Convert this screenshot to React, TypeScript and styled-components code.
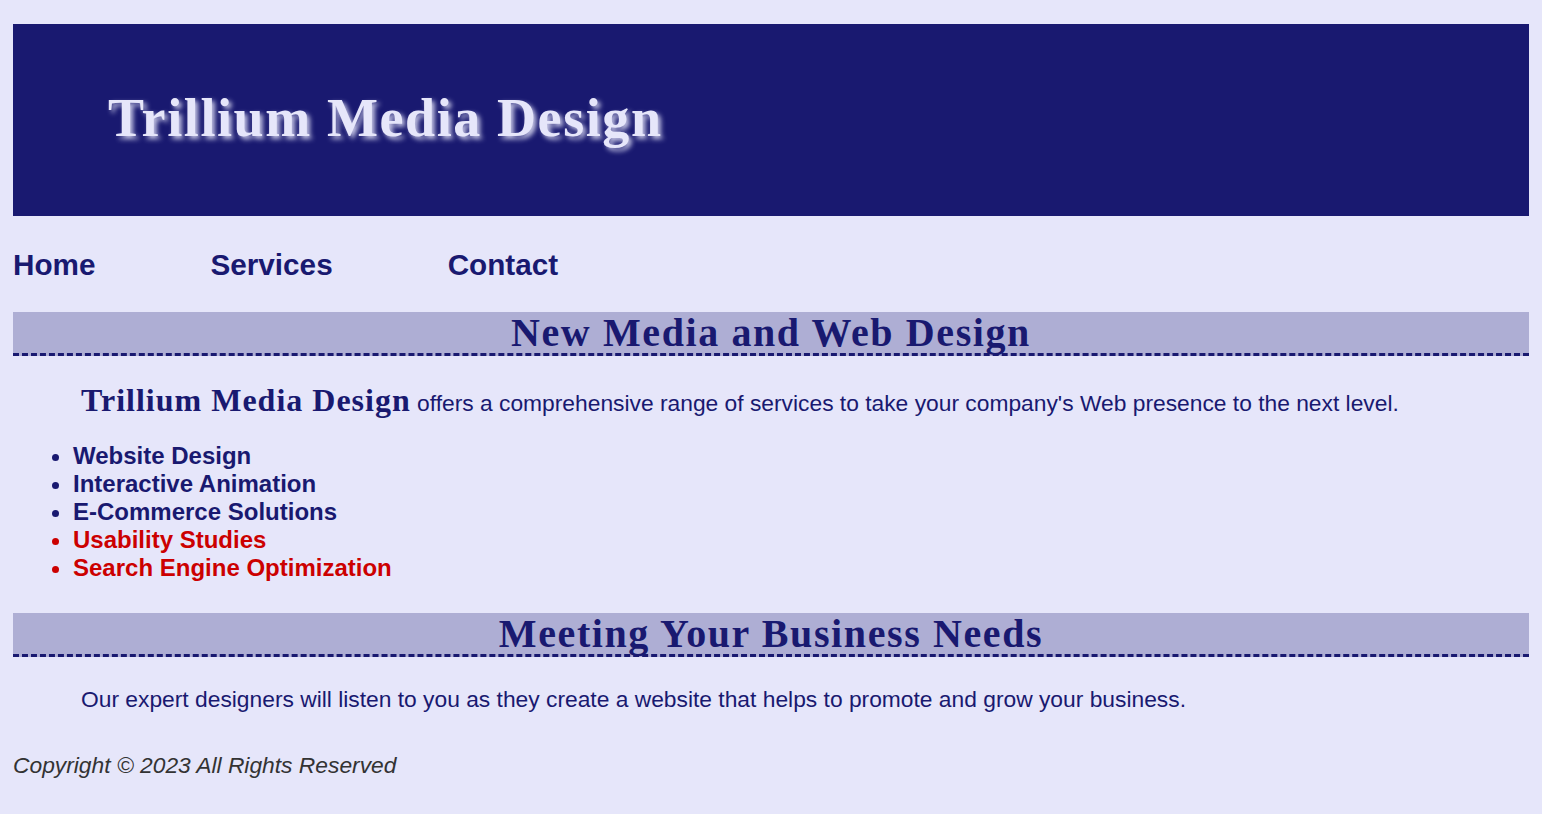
import styled, { createGlobalStyle } from 'styled-components';

const NAVY = '#191970';
const LAVENDER = '#E6E6FA';

const GlobalStyle = createGlobalStyle`
  html, body {
    margin: 0;
    padding: 0;
    background: ${LAVENDER};
  }
  body {
    color: ${NAVY};
    font-family: 'Liberation Sans', Arial, sans-serif;
  }
`;

const Wrapper = styled.div`
  display: flex;
  flex-direction: column;
  padding: 24px 13px 30px;
`;

const Header = styled.header`
  height: 192px;
  background: ${NAVY};
  display: flex;
  align-items: center;
  padding: 0 0 4px 95px;
  box-sizing: border-box;
`;

const Title = styled.h1`
  margin: 0;
  font-family: 'Liberation Serif', 'Times New Roman', serif;
  font-size: 54px;
  font-weight: bold;
  letter-spacing: 1.6px;
  color: ${LAVENDER};
  text-shadow: 3px 3px 5px #c8c8e6;
`;

const Nav = styled.nav`
  display: flex;
  gap: 115px;
  margin-top: 32px;
`;

const NavLink = styled.a`
  font-size: 29.7px;
  font-weight: bold;
  color: ${NAVY};
  text-decoration: none;
`;

const SectionHeading = styled.h2<{ $top: number }>`
  margin: ${p => p.$top}px 0 0;
  background: #aeaed4;
  border-bottom: 3px dashed ${NAVY};
  text-align: center;
  font-family: 'Liberation Serif', 'Times New Roman', serif;
  font-size: 40px;
  line-height: 41px;
  letter-spacing: 1.6px;
  font-weight: bold;
`;

const Para = styled.p<{ $top: number }>`
  margin: ${p => p.$top}px 0 0;
  padding-left: 68px;
  font-size: 22.8px;
`;

const Company = styled.span`
  font-family: 'Liberation Serif', 'Times New Roman', serif;
  font-size: 32px;
  font-weight: bold;
  letter-spacing: 1px;
`;

const List = styled.ul`
  margin: 23px 0 0;
  padding-left: 60px;
`;

const Item = styled.li<{ $hot?: boolean }>`
  font-size: 24px;
  font-weight: bold;
  color: ${p => (p.$hot ? '#cc0000' : NAVY)};
`;

const Footer = styled.footer`
  margin-top: 39px;
  font-size: 22.8px;
  font-style: italic;
  color: #333333;
`;

const services = [
  { name: 'Website Design' },
  { name: 'Interactive Animation' },
  { name: 'E-Commerce Solutions' },
  { name: 'Usability Studies', hot: true },
  { name: 'Search Engine Optimization', hot: true },
];

export default function App() {
  return (
    <>
      <GlobalStyle />
      <Wrapper>
        <Header>
          <Title>Trillium Media Design</Title>
        </Header>
        <Nav>
          <NavLink href="#">Home</NavLink>
          <NavLink href="#">Services</NavLink>
          <NavLink href="#">Contact</NavLink>
        </Nav>
        <SectionHeading $top={30}>New Media and Web Design</SectionHeading>
        <Para $top={26}>
          <Company>Trillium Media Design</Company> offers a comprehensive range of services to take your
          company's Web presence to the next level.
        </Para>
        <List>
          {services.map(s => (
            <Item key={s.name} $hot={s.hot}>{s.name}</Item>
          ))}
        </List>
        <SectionHeading $top={31}>Meeting Your Business Needs</SectionHeading>
        <Para $top={29}>
          Our expert designers will listen to you as they create a website that helps to promote and grow
          your business.
        </Para>
        <Footer>Copyright © 2023 All Rights Reserved</Footer>
      </Wrapper>
    </>
  );
}
